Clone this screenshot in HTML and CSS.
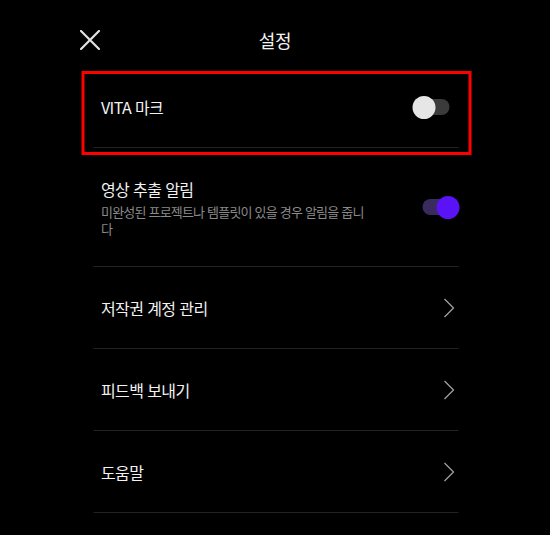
FILE: index.html
```html
<!DOCTYPE html>
<html lang="ko">
<head>
<meta charset="utf-8">
<title>설정</title>
<link rel="stylesheet" href="styles.css">
</head>
<body>
  <header class="topbar">
    <button class="close-btn" aria-label="닫기">
      <svg width="20" height="20" viewBox="0 0 20 20" fill="none">
        <path d="M1 1 L19 19 M19 1 L1 19" stroke="#e2e2e2" stroke-width="2.2" stroke-linecap="square"/>
      </svg>
    </button>
    <h1 class="title">설정</h1>
  </header>

  <ul class="settings">
    <li class="row row--highlight">
      <span class="label">VITA 마크</span>
      <span class="switch switch--inset"><span class="track"></span><span class="thumb"></span></span>
    </li>
    <li class="row row--tall">
      <div class="text">
        <span class="label">영상 추출 알림</span>
        <span class="desc">미완성된 프로젝트나 템플릿이 있을 경우 알림을 줍니다</span>
      </div>
      <span class="switch is-on"><span class="track"></span><span class="thumb"></span></span>
    </li>
    <li class="row">
      <span class="label">저작권 계정 관리</span>
      <svg class="chevron" width="11" height="20" viewBox="0 0 11 20" fill="none">
        <path d="M1 1 L10 10 L1 19" stroke="#a0a0a0" stroke-width="1.3"/>
      </svg>
    </li>
    <li class="row">
      <span class="label">피드백 보내기</span>
      <svg class="chevron" width="11" height="20" viewBox="0 0 11 20" fill="none">
        <path d="M1 1 L10 10 L1 19" stroke="#a0a0a0" stroke-width="1.3"/>
      </svg>
    </li>
    <li class="row">
      <span class="label">도움말</span>
      <svg class="chevron" width="11" height="20" viewBox="0 0 11 20" fill="none">
        <path d="M1 1 L10 10 L1 19" stroke="#a0a0a0" stroke-width="1.3"/>
      </svg>
    </li>
  </ul>
</body>
</html>
```

FILE: styles.css
```css
* { box-sizing: border-box; }

html, body {
  margin: 0;
  padding: 0;
  background: #000;
  color: #f2f2f2;
  font-family: "Noto Sans CJK KR", "Noto Sans", sans-serif;
}

/* top bar: close button on the left, centered title */
.topbar {
  position: relative;
  height: 67px;
  display: flex;
  justify-content: center;
  padding-top: 22px;
}

.close-btn {
  position: absolute;
  left: 80px;
  top: 30px;
  width: 20px;
  height: 20px;
  padding: 0;
  border: 0;
  background: none;
  display: flex;
}

.title {
  margin: 0;
  font-size: 18px;
  font-weight: 400;
  line-height: 36px;
  height: 36px;
  letter-spacing: -0.3px;
}

/* settings list */
.settings {
  list-style: none;
  margin: 0 auto;
  padding: 0;
  width: 365px;
  transform: translateX(0.5px);
}

.row {
  position: relative;
  display: flex;
  align-items: center;
  justify-content: space-between;
  height: 82px;
  padding: 0 4px 0 8px;
  border-bottom: 1px solid #222;
}

.row--highlight {
  height: 81px;
}

.row--tall {
  height: 119px;
  padding-right: 0;
}

/* red frame drawn around the first option */
.row--highlight::after {
  content: "";
  position: absolute;
  top: 4px;
  left: -12px;
  right: -13px;
  bottom: -8px;
  border: 3px solid #f00;
  pointer-events: none;
}

.text {
  display: flex;
  flex-direction: column;
}

.label {
  font-size: 16px;
  line-height: 22px;
  letter-spacing: -0.6px;
  color: #f2f2f2;
}

.desc {
  margin-top: 3px;
  width: 272px;
  font-size: 13px;
  line-height: 17px;
  letter-spacing: -0.8px;
  color: #8a8a8a;
}

/* toggle switch: thumb slightly overhangs the track */
.switch {
  position: relative;
  width: 36px;
  height: 23px;
  flex: none;
}

.switch--inset {
  margin-right: 5px;
}

.switch .track {
  position: absolute;
  left: 0;
  right: 0;
  top: 3.5px;
  height: 16px;
  border-radius: 8px;
  background: #3b3b3b;
}

.switch .thumb {
  position: absolute;
  top: 0;
  left: -1px;
  width: 23px;
  height: 23px;
  border-radius: 50%;
  background: #e6e6e6;
}

.switch.is-on .track { background: #3a2b5e; }

.switch.is-on .thumb {
  left: 14px;
  background: #5a12f6;
}

.chevron {
  flex: none;
  margin-top: 1px;
}
```
